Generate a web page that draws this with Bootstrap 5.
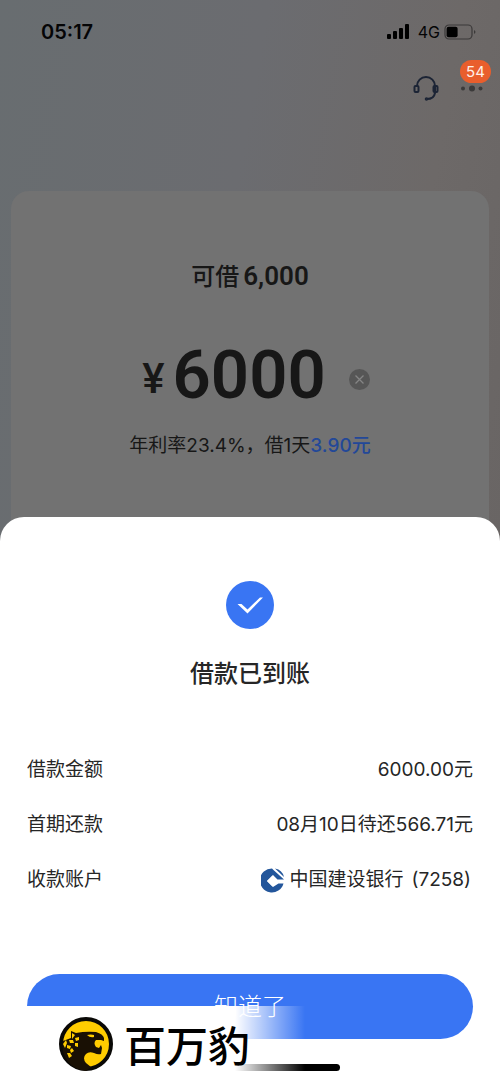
<!DOCTYPE html>
<html lang="zh-CN">
<head>
<meta charset="utf-8">
<meta name="viewport" content="width=device-width, initial-scale=1">
<title>借款已到账</title>
<link href="https://cdn.jsdelivr.net/npm/bootstrap@5.3.0/dist/css/bootstrap.min.css" rel="stylesheet">
<style>
body { font-family: Inter, "Noto Sans CJK SC", sans-serif; font-size: 19px; line-height: 28px; color: #262626; background: #fff; }
.dimmed { background: linear-gradient(100deg, #686d70 0%, #6b6c70 45%, #6d6968 78%, #696564 100%); }
.status-bar { height: 64px; padding: 0 24px 0 41px; color: #050506; }
.clock { font-size: 20px; font-weight: 600; }
.network { font-size: 16px; }
.toolbar { height: 127px; padding: 10px 12px 0 0; gap: 20px; }
.tool { width: 28px; height: 28px; line-height: 1; }
.unread { top: -14px; left: 0; width: 31px; height: 23px; line-height: 23px; font-size: 15px; color: #fff0e8; background: #e95e2c; }
.loan-card { margin: 0 11px; padding: 68px 0 83px; border-radius: 18px 18px 0 0; background: #727272; color: #171717; }
.din { font-family: Roboto, "Noto Sans CJK SC", sans-serif; }
.available { font-size: 24px; line-height: 34px; font-weight: 500; }
.available .din { font-size: 26px; font-weight: 600; }
.amount { height: 82px; margin-top: 40px; margin-bottom: 16px; padding-left: 12px; }
.yen { font-size: 42px; line-height: 54px; font-weight: 500; padding-top: 8px; }
.sum { font-size: 67px; line-height: 82px; font-weight: 600; margin-left: 8px; }
.clear { margin-left: 23px; margin-top: 8px; }
.rate b { color: #234898; font-weight: 500; }
.sheet { margin-top: -26px; padding: 64px 27px 10px; border-radius: 24px 24px 0 0; background: #fff; }
.sheet-title { font-size: 24px; line-height: 36px; font-weight: 500; margin: 27px 0 64px; }
.details { row-gap: 27px; }
.account { padding-right: 2px; }
.confirm { height: 65px; margin-top: 80px; font-size: 24px; font-weight: 300; color: #fff; background: #3975f3; }
.confirm:hover { color: #fff; background: #3975f3; }
.home-bar { width: 180px; height: 7px; margin-top: 25px; background: #000; }
.brand { left: 0; bottom: 0; width: 305px; height: 75px; padding-left: 59px; gap: 11px; background: linear-gradient(90deg, #fff 235px, transparent 305px); pointer-events: none; }
.brand-name { font-family: "Noto Sans CJK SC", sans-serif; font-size: 42px; line-height: 54px; font-weight: 500; color: #000; }
</style>
</head>
<body>
<div class="position-relative">
  <div class="dimmed">
    <div class="status-bar d-flex align-items-center justify-content-between">
      <span class="clock">05:17</span>
      <div class="d-flex align-items-center">
        <svg width="24" height="16" viewBox="0 0 24 16" aria-hidden="true"><rect x="1" y="10" width="4" height="5" rx="1"/><rect x="7" y="7" width="4" height="8" rx="1"/><rect x="13" y="4" width="4" height="11" rx="1"/><rect x="19" y="0" width="4" height="15" rx="1"/></svg>
        <span class="network ms-2 me-1">4G</span>
        <svg width="32" height="16" viewBox="0 0 32 16" aria-hidden="true"><rect x="1" y="1" width="27" height="14" rx="4" fill="none" stroke="#3b3939" stroke-width="1.2"/><rect x="2.600" y="2.700" width="11" height="10.600" rx="2"/><path d="M30 6v4c2-1 2-3 0-4" fill="#3b3939"/></svg>
      </div>
    </div>
    <div class="toolbar d-flex justify-content-end align-items-start">
      <button type="button" class="tool btn border-0 p-0" aria-label="客服">
        <svg width="28" height="28" viewBox="0 0 28 28" fill="none" stroke="#1c2435" stroke-width="2"><path d="M5 12a9 9 0 0 1 18 0v7q-1 6-8 6"/><rect x="2.500" y="12" width="4" height="6" rx="1"/><rect x="21.500" y="12" width="4" height="6" rx="1"/><circle cx="14.500" cy="25" r=".8"/></svg>
      </button>
      <button type="button" class="tool btn border-0 p-0 position-relative" aria-label="更多">
        <svg width="28" height="28" viewBox="0 0 28 28" fill="#3b3a3a"><circle cx="3" cy="14.500" r="2"/><circle cx="12" cy="14.500" r="3"/><circle cx="20.500" cy="14.500" r="2"/></svg>
        <span class="unread position-absolute rounded-pill">54</span>
      </button>
    </div>
    <main class="loan-card text-center">
      <div class="available">可借<span class="din ms-1">6,000</span></div>
      <div class="amount din d-flex align-items-center justify-content-center">
        <span class="yen">¥</span><span class="sum">6000</span>
        <button type="button" class="clear btn border-0 p-0 d-flex" aria-label="清除">
          <svg width="21" height="21" viewBox="0 0 21 21"><circle cx="10.500" cy="10.500" r="10.500" fill="#565656"/><path d="m6.500 6.500 8 8m0-8-8 8" stroke="#858585" stroke-width="1.300"/></svg>
        </button>
      </div>
      <div class="rate">年利率23.4%，借1天<b>3.90元</b></div>
    </main>
  </div>
  <section class="sheet position-relative" role="dialog" aria-labelledby="done">
    <svg class="d-block mx-auto" width="48" height="48" viewBox="0 0 48 48" aria-hidden="true"><circle cx="24" cy="24" r="24" fill="#3975f3"/><path d="M11.500 23h4l6 5.500L34 16.500h3L21.500 32.500Z" fill="#fff"/></svg>
    <h1 class="sheet-title text-center" id="done">借款已到账</h1>
    <div class="details d-grid">
      <div class="d-flex justify-content-between"><span>借款金额</span><span>6000.00元</span></div>
      <div class="d-flex justify-content-between"><span>首期还款</span><span>08月10日待还566.71元</span></div>
      <div class="d-flex justify-content-between"><span>收款账户</span>
        <span class="account d-flex align-items-center">
          <svg class="me-1" width="24" height="26" viewBox="0 0 24 26" aria-hidden="true"><path fill="#23569b" fill-rule="evenodd" d="M11 1.500a12 12 0 1 0 11.500 15h-5L12 20l-6-6 6-6 4.500 4.500h6.500L12.500 3Z"/><path d="m14 1.500 9 8.500q-1.500-7-9-8.500Z" fill="#23569b"/><path d="m6 14 5.500-5.500L17 14l-5.500 5.500Z" fill="#fff"/></svg>
          <span>中国建设银行</span><span class="ms-2">(7258)</span>
        </span>
      </div>
    </div>
    <button type="button" class="confirm btn border-0 rounded-pill w-100">知道了</button>
    <div class="home-bar rounded-pill mx-auto"></div>
  </section>
  <aside class="brand position-absolute d-flex align-items-center">
    <svg width="54" height="54" viewBox="0 0 54 54" aria-hidden="true">
      <circle cx="27" cy="27" r="25" fill="#fc0" stroke="#090806" stroke-width="4"/>
      <path d="M4 24 12 21V14l5 2q10-2 20-1 7 2 8 6v3l-3-1-5 0q-3 3 0 7l3 1 2-3 1 3-1 6q-3 1-7-1-5-2-8 1-4 4 0 9l5 4-5 4A25 25 0 0 1 4 24Z" fill="#191004"/>
      <path d="M28 18q4-1 7 0l0 2q-4 1-7-2Z" fill="#fc0"/>
      <g fill="#fc0"><path d="m13 16 3 2-3 4Z"/><path d="m16 21 4-1 0 3-3 1ZM10 23l4 0 1 3-4 0ZM16 26l3 0 0 4-3-1ZM8 28l4 1-1 3-3-1ZM13 31l2 3-3 2-1-3ZM8 36l3 0 2 3-3 2Z"/><path d="m4 27 3-4 1 3-2 5Z"/></g>
    </svg>
    <span class="brand-name">百万豹</span>
  </aside>
</div>
<script src="https://cdn.jsdelivr.net/npm/bootstrap@5.3.0/dist/js/bootstrap.bundle.min.js"></script>
</body>
</html>
